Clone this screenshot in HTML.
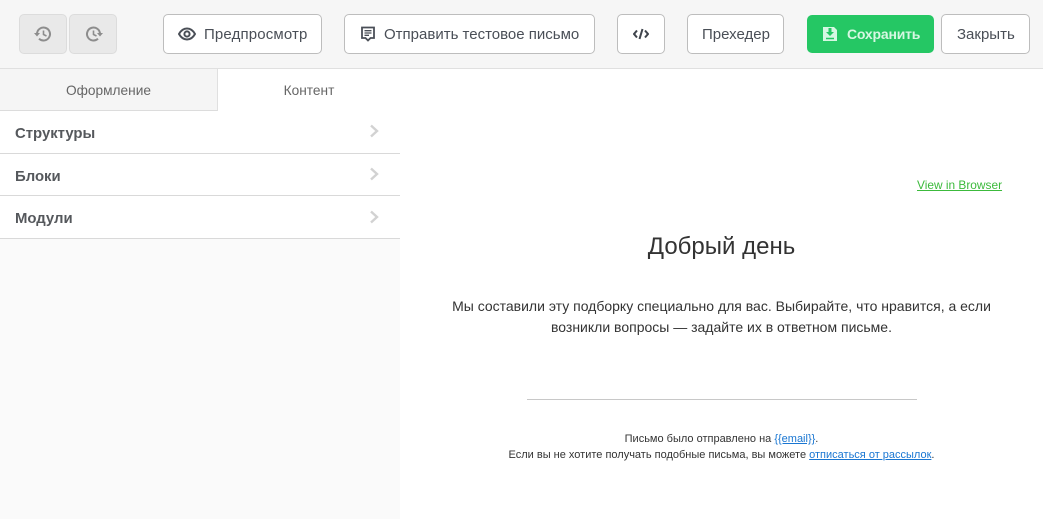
<!DOCTYPE html>
<html><head><meta charset="utf-8"><style>
*{box-sizing:border-box}
html,body{margin:0;padding:0;width:1043px;height:519px;overflow:hidden;background:#fff;font-family:"Liberation Sans",sans-serif}
.a{position:absolute;white-space:nowrap}
.bar{left:0;top:0;width:1043px;height:69px;background:#f6f6f6;border-bottom:1px solid #e0e0e0}
.b{position:absolute;top:14px;height:40px;background:#fff;border:1px solid #bdbdbd;border-radius:5px;color:#4a4f57;font-size:15px;line-height:38px;white-space:nowrap}
.b span{position:absolute;top:1px}
.g{background:#e9e9e9;border-color:#dcdcdc}
svg{position:absolute;fill:none}
.row{left:0;width:400px;height:43px;background:#fff;border-bottom:1px solid #d9d9d9}
.row b{position:absolute;left:15px;top:14px;font-size:14.9px;line-height:18px;color:#55585c;font-weight:bold;font-family:"Liberation Sans",sans-serif}
.t{font-size:14px;color:#333;text-align:center}
.f{font-size:11px;color:#333;text-align:center;left:400px;width:643px}
a{color:#1976d2;text-decoration:underline}
</style></head><body>
<div class="a bar"></div>

<div class="b g" style="left:19px;width:48px"><svg style="left:13px;top:10px" width="20" height="18" viewBox="0 0 20 18"><path d="M4 9a6.500 6.500 0 1 1 2 4.700" stroke="#8d8d8d" stroke-width="2"/><path d="M1 8h6l-3 3.500z" fill="#8d8d8d"/><path d="M10.500 5.500V9.500l3 1.500" stroke="#8d8d8d" stroke-width="1.600"/></svg></div>
<div class="b g" style="left:69px;width:48px"><svg style="left:14px;top:10px" width="20" height="18" viewBox="0 0 20 18"><path d="M16 9a6.500 6.500 0 1 0-2 4.700" stroke="#8d8d8d" stroke-width="2"/><path d="M19 8h-6l3 3.500z" fill="#8d8d8d"/><path d="M9.500 5.500V9.500l3 1.500" stroke="#8d8d8d" stroke-width="1.600"/></svg></div>

<div class="b" style="left:163px;width:159px"><svg style="left:14px;top:11px" width="18" height="16" viewBox="0 0 18 16"><path d="M1 8c2-3.600 4.800-5.500 8-5.500S15 4.400 17 8c-2 3.600-4.800 5.500-8 5.500S3 11.600 1 8z" stroke="#4a4f57" stroke-width="2"/><circle cx="9" cy="8" r="2.600" stroke="#4a4f57" stroke-width="2"/></svg><span style="left:40px;letter-spacing:.15px">Предпросмотр</span></div>

<div class="b" style="left:344px;width:251px"><svg style="left:15px;top:11px" width="16" height="16" viewBox="0 0 16 16"><path d="M2 1.500h12v10.500h-3.500l-2.500 2.500-2.500-2.500H2z" stroke="#4a4f57" stroke-width="1.800"/><path d="M4.500 4.700h7M4.500 7h7M4.500 9.300h4.500" stroke="#4a4f57" stroke-width="1.300"/></svg><span style="left:39px">Отправить тестовое письмо</span></div>

<div class="b" style="left:617px;width:48px"><svg style="left:15px;top:12px" width="16" height="14" viewBox="0 0 16 14"><path d="M4 3.500 1 7l3 3.500M12 3.500 15 7l-3 3.500M9.500 2l-3 10" stroke="#3f444c" stroke-width="2"/></svg></div>

<div class="b" style="left:687px;width:97px"><span style="left:14px">Прехедер</span></div>

<div class="b" style="left:807px;top:15px;width:127px;height:38px;background:#25c764;border:0;color:#d6f7e2;font-size:14px;font-weight:bold;letter-spacing:-.2px;line-height:38px"><svg style="left:15px;top:11px" width="16" height="16" viewBox="0 0 16 16"><path d="M1 1h11l3 3v11H1z" fill="#d6f7e2"/><path d="M6.500 2v4H4l4 4 4-4H9.500V2z" fill="#25c764"/><path d="M4 12.500h8" stroke="#25c764" stroke-width="1.500"/></svg><span style="left:40px;top:0">Сохранить</span></div>

<div class="b" style="left:941px;width:89px"><span style="left:15px">Закрыть</span></div>

<div class="a" style="left:0;top:69px;width:218px;height:42px;background:#f5f5f5;border-right:1px solid #e0e0e0;border-bottom:1px solid #dcdcdc;text-align:center;font-size:13.7px;line-height:43px;color:#666">Оформление</div>
<div class="a" style="left:218px;top:69px;width:182px;height:42px;background:#fff;text-align:center;font-size:13.7px;line-height:43px;color:#666">Контент</div>

<div class="a" style="left:0;top:239px;width:400px;height:280px;background:#fafafa"></div>
<div class="a row" style="top:111px"><b>Структуры</b><svg style="left:369px;top:13px" width="11" height="14" viewBox="0 0 11 14"><path d="M2 1.500 8 7l-6 5.500" stroke="#d2d2d2" stroke-width="2.400"/></svg></div>
<div class="a row" style="top:154px;height:42px"><b>Блоки</b><svg style="left:369px;top:13px" width="11" height="14" viewBox="0 0 11 14"><path d="M2 1.500 8 7l-6 5.500" stroke="#d2d2d2" stroke-width="2.400"/></svg></div>
<div class="a row" style="top:196px"><b>Модули</b><svg style="left:369px;top:14px" width="11" height="14" viewBox="0 0 11 14"><path d="M2 1.500 8 7l-6 5.500" stroke="#d2d2d2" stroke-width="2.400"/></svg></div>

<a class="a" style="left:917px;top:178px;font-size:11.9px;line-height:14px;color:#3cba3c">View in Browser</a>
<div class="a t" style="left:400px;width:643px;top:232px;font-size:24px;line-height:30px;color:#333">Добрый день</div>
<div class="a t" style="left:400px;width:643px;top:296px;line-height:21px">Мы составили эту подборку специально для вас. Выбирайте, что нравится, а если<br>возникли вопросы — задайте их в ответном письме.</div>
<div class="a" style="left:527px;top:399px;width:390px;height:1px;background:#c8c8c8"></div>
<div class="a f" style="top:431px;line-height:16px">Письмо было отправлено на <a>{{email}}</a>.<br>Если вы не хотите получать подобные письма, вы можете <a>отписаться от рассылок</a>.</div>
</body></html>
